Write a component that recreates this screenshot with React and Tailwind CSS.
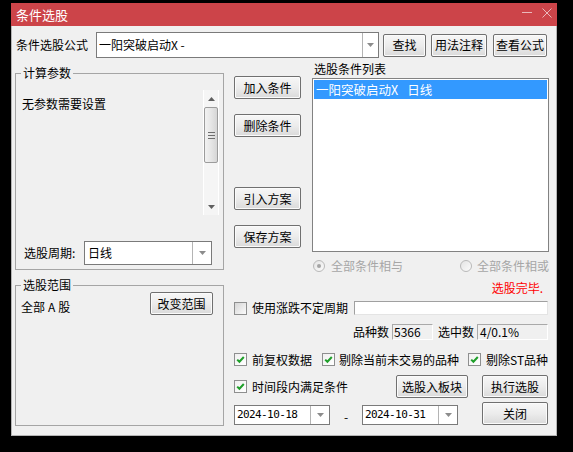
import React from 'react';

function Btn({ children, className = '' }) {
  return (
    <div
      className={`flex items-center justify-center border border-[#707070] rounded-[2px] bg-gradient-to-b from-[#f7f7f7] via-[#ececec] to-[#dadada] shadow-[inset_0_0_0_1px_#fbfbfb] text-[12px] leading-none text-black whitespace-nowrap ${className}`}
    >
      {children}
    </div>
  );
}

function Arrow() {
  return (
    <svg width="7" height="4" viewBox="0 0 7 4">
      <path d="M0 0H7L3.5 4Z" fill="#8c8c8c" />
    </svg>
  );
}

function Combo({ children, className = '', arrow = 'w-[16px]', pad = 'pl-[2px]' }) {
  return (
    <div className={`flex shrink-0 border border-[#7a7a7a] bg-white ${className}`}>
      <div className={`flex-1 min-w-0 flex items-center whitespace-pre ${pad}`}>{children}</div>
      <div className={`${arrow} border-l border-[#b4b4b4] flex items-center justify-center`}>
        <Arrow />
      </div>
    </div>
  );
}

function Check({ on = true }) {
  return (
    <div
      className={`w-[13px] h-[13px] shrink-0 border border-[#8e8f8f] flex items-center justify-center ${
        on ? 'bg-gradient-to-br from-[#f0f0f0] to-[#ffffff]' : 'bg-gradient-to-br from-[#d6d6d6] to-[#fbfbfb]'
      }`}
    >
      {on && (
        <svg width="11" height="11" viewBox="0 0 11 11">
          <path d="M2.2 5.6L4.4 7.8L8.8 3" fill="none" stroke="#1f9f2a" strokeWidth="2" />
        </svg>
      )}
    </div>
  );
}

function Radio({ on }) {
  return (
    <div className="w-[12px] h-[12px] shrink-0 rounded-full border border-[#b9b9b9] bg-gradient-to-br from-[#e4e4e4] to-[#fbfbfb] flex items-center justify-center">
      {on && <div className="w-[4px] h-[4px] rounded-full bg-[#a4a4a4]" />}
    </div>
  );
}

function ScrollArrow({ up }) {
  return (
    <div className="h-[17px] flex items-center justify-center">
      <svg width="7" height="4" viewBox="0 0 7 4">
        <path d={up ? 'M0 4H7L3.5 0Z' : 'M0 0H7L3.5 4Z'} fill="#606060" />
      </svg>
    </div>
  );
}

export default function App() {
  return (
    <div className="w-[573px] h-[452px] bg-black pl-[11px] pt-[3px] font-['Noto_Sans_CJK_SC',sans-serif]">
      <div className="w-[546px] h-[433px] flex flex-col">
        {/* title bar */}
        <div className="h-[23px] bg-[#cc4449] flex items-center pl-[5px] pr-[5px] text-white text-[13px] leading-none">
          <span>条件选股</span>
          <div className="ml-auto self-start mt-[5px] flex gap-[10px]">
            <svg width="10" height="10" viewBox="0 0 10 10">
              <path d="M0 4.5H10" stroke="#eab8ba" strokeWidth="1" />
            </svg>
            <svg width="10" height="10" viewBox="0 0 10 10">
              <path d="M0.5 0.5L9.5 9.5M9.5 0.5L0.5 9.5" stroke="#eab8ba" strokeWidth="1" />
            </svg>
          </div>
        </div>

        <div className="flex-1 bg-[#f0f0f0] border-x border-b border-[#b4b4b4] pl-[3px] pt-[6px] text-[12px] leading-[14px] text-black whitespace-nowrap">
          {/* formula row */}
          <div className="flex items-center h-[26px]">
            <div className="ml-[1px] w-[80px]">条件选股公式</div>
            <Combo className="w-[283px] h-[26px]" pad="pl-[2px]">
              <span>一阳突破启动X -</span>
            </Combo>
            <Btn className="ml-[4px] w-[43px] h-[23px]">查找</Btn>
            <Btn className="ml-[5px] w-[56px] h-[23px]">用法注释</Btn>
            <Btn className="ml-[6px] w-[54px] h-[23px]">查看公式</Btn>
          </div>

          {/* upper part */}
          <div className="mt-[5px] flex items-start">
            <fieldset className="mt-[4px] w-[209px] h-[203px] shrink-0 border border-[#a5a5a5] p-0">
              <legend className="ml-[5px] px-[2px] text-[12px] leading-[12px]">计算参数</legend>
              <div className="mt-[11px] flex">
                <div className="flex-1 pl-[6px] pt-[7px]">无参数需要设置</div>
                <div className="w-[16px] h-[125px] mr-[4px] bg-[#f5f5f5] border-x border-white flex flex-col">
                  <ScrollArrow up />
                  <div className="h-[56px] border border-[#9c9c9c] rounded-[2px] bg-gradient-to-r from-[#f2f2f2] via-[#e6e6e6] to-[#d6d6d6] flex flex-col items-center justify-center gap-[2px]">
                    <div className="w-[7px] h-[1px] bg-[#6e6e6e]" />
                    <div className="w-[7px] h-[1px] bg-[#6e6e6e]" />
                    <div className="w-[7px] h-[1px] bg-[#6e6e6e]" />
                  </div>
                  <div className="flex-1" />
                  <ScrollArrow />
                </div>
              </div>
              <div className="mt-[26px] flex items-center">
                <div className="pl-[8px] w-[68px]">选股周期:</div>
                <Combo className="w-[128px] h-[24px]" arrow="w-[19px]" pad="pl-[3px]">
                  <span>日线</span>
                </Combo>
              </div>
            </fieldset>

            <div className="ml-[10px] w-[67px] shrink-0 flex flex-col">
              <Btn className="mt-[13px] h-[23px]">加入条件</Btn>
              <Btn className="mt-[15px] h-[23px]">删除条件</Btn>
              <Btn className="mt-[50px] h-[23px]">引入方案</Btn>
              <Btn className="mt-[15px] h-[23px]">保存方案</Btn>
            </div>

            <div className="ml-[11px] w-[237px] shrink-0 flex flex-col">
              <div className="h-[15px] pl-[2px] leading-[12px]">选股条件列表</div>
              <div className="h-[174px] border border-[#828282] bg-white p-[1px]">
                <div className="h-[19px] bg-[#3399ff] text-white flex items-center pl-[2px] text-[12.5px]">
                  <span>一阳突破启动X</span>
                  <span className="ml-[9px]">日线</span>
                </div>
              </div>
              <div className="mt-[8px] h-[12px] flex items-center text-[#a6a6a6]">
                <div className="ml-[1px]">
                  <Radio on />
                </div>
                <span className="ml-[6px]">全部条件相与</span>
                <div className="ml-auto">
                  <Radio />
                </div>
                <span className="ml-[5px]">全部条件相或</span>
              </div>
            </div>
          </div>

          {/* lower part */}
          <div className="mt-[7px] flex items-start">
            <fieldset className="w-[209px] h-[147px] shrink-0 border border-[#a5a5a5] p-0">
              <legend className="ml-[5px] px-[2px] text-[12px] leading-[12px]">选股范围</legend>
              <div className="flex items-start">
                <div className="pl-[5px] mt-[9px]">
                  全部<span className="mx-[3px]">A</span>股
                </div>
                <Btn className="ml-auto mr-[10px] mt-[1px] w-[63px] h-[23px]">改变范围</Btn>
              </div>
            </fieldset>

            <div className="ml-[10px] w-[314px] shrink-0 flex flex-col">
              <div className="mt-[2px] h-[14px] text-right pr-[5px] text-[#ff0000]">选股完毕.</div>

              <div className="mt-[6px] h-[14px] flex items-center">
                <Check on={false} />
                <span className="ml-[5px]">使用涨跌不定周期</span>
                <div className="ml-auto w-[194px] h-[14px] shrink-0 bg-white border border-[#a0a0a0] border-b-[#e4e4e4] border-r-[#e4e4e4]" />
              </div>

              <div className="mt-[9px] h-[16px] flex items-center justify-end">
                <span>品种数</span>
                <div className="ml-[3px] w-[41px] h-[16px] border border-[#a9a9a9] border-b-white border-r-white pl-[1px] flex items-center">
                  5366
                </div>
                <span className="ml-[5px]">选中数</span>
                <div className="ml-[3px] w-[71px] h-[16px] border border-[#a9a9a9] border-b-white border-r-white pl-[2px] flex items-center">
                  4/0.1%
                </div>
              </div>

              <div className="mt-[13px] h-[13px] flex items-center">
                <Check />
                <span className="ml-[5px]">前复权数据</span>
                <div className="ml-[10px]">
                  <Check />
                </div>
                <span className="ml-[4px]">剔除当前未交易的品种</span>
                <div className="ml-[9px]">
                  <Check />
                </div>
                <span className="ml-[5px]">剔除ST品种</span>
              </div>

              <div className="mt-[9px] flex">
                <div className="w-[234px] shrink-0 flex flex-col">
                  <div className="h-[23px] flex items-center">
                    <Check />
                    <span className="ml-[5px]">时间段内满足条件</span>
                    <Btn className="ml-auto w-[72px] h-[23px]">选股入板块</Btn>
                  </div>
                  <div className="mt-[7px] h-[20px] flex items-center">
                    <Combo
                      className="w-[96px] h-[20px] font-['DejaVu_Sans_Mono',monospace] text-[11px] tracking-[-0.6px]"
                      arrow="w-[19px]"
                      pad="pl-[2px]"
                    >
                      <span>2024-10-18</span>
                    </Combo>
                    <div className="w-[32px] text-center pt-[3px]">-</div>
                    <Combo
                      className="w-[96px] h-[20px] font-['DejaVu_Sans_Mono',monospace] text-[11px] tracking-[-0.6px]"
                      arrow="w-[19px]"
                      pad="pl-[2px]"
                    >
                      <span>2024-10-31</span>
                    </Combo>
                  </div>
                </div>
                <div className="ml-auto w-[66px] shrink-0 flex flex-col">
                  <Btn className="h-[23px]">执行选股</Btn>
                  <Btn className="mt-[4px] h-[23px]">关闭</Btn>
                </div>
              </div>
            </div>
          </div>
        </div>
      </div>
    </div>
  );
}
